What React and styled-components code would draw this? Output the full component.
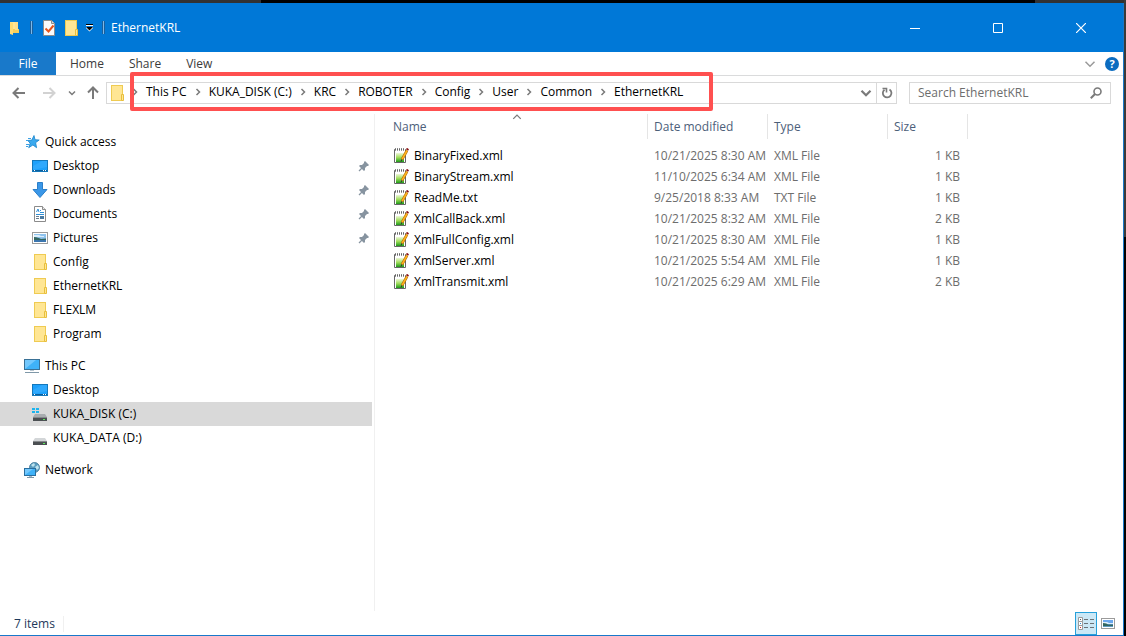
import React from "react";
import styled, { createGlobalStyle } from "styled-components";

const crumbs = [
    "This PC",
    "KUKA_DISK (C:)",
    "KRC",
    "ROBOTER",
    "Config",
    "User",
    "Common",
    "EthernetKRL",
];

const files = [
    { name: "BinaryFixed.xml", date: "10/21/2025 8:30 AM", type: "XML File", size: "1 KB" },
    { name: "BinaryStream.xml", date: "11/10/2025 6:34 AM", type: "XML File", size: "1 KB" },
    { name: "ReadMe.txt", date: "9/25/2018 8:33 AM", type: "TXT File", size: "1 KB" },
    { name: "XmlCallBack.xml", date: "10/21/2025 8:32 AM", type: "XML File", size: "2 KB" },
    { name: "XmlFullConfig.xml", date: "10/21/2025 8:30 AM", type: "XML File", size: "1 KB" },
    { name: "XmlServer.xml", date: "10/21/2025 5:54 AM", type: "XML File", size: "1 KB" },
    { name: "XmlTransmit.xml", date: "10/21/2025 6:29 AM", type: "XML File", size: "2 KB" },
];

const FolderIcon = () => (
    <svg width="16" height="16" viewBox="0 0 16 16">
        <rect x="2.5" y="0.5" width="11" height="15" fill="#ffe694" stroke="#efcb52" />
        <path d="M12.5 9.5h2v6h-2z" fill="#ffe694" stroke="#e8bf3c" />
    </svg>
);

const SmallFolderIcon = () => (
    <svg width="16" height="16" viewBox="0 0 16 16">
        <path d="M4 2h5v11H4z" fill="#ffe694" />
        <path d="M4 2l3 1v12l-3-1z" fill="#ffdc73" />
        <path d="M7 9h6v4H7z" fill="#f5cf5b" />
        <path d="M9 2h3v8H9z" fill="#ffe08a" />
    </svg>
);

const CheckDocIcon = () => (
    <svg width="16" height="16" viewBox="0 0 16 16">
        <path d="M2.5 0.5h8l3 3v12h-11z" fill="#fbfbfb" stroke="#8d8d8d" />
        <path d="M10.5 0.5v3h3" fill="#ddd" stroke="#8d8d8d" />
        <path d="M4.5 8.5l3 3 5-6" fill="none" stroke="#e8541c" strokeWidth="2" />
    </svg>
);

const QuickMenuIcon = () => (
    <svg width="9" height="8" viewBox="0 0 9 8">
        <path d="M1 0h7v1H1z" fill="#000" />
        <path d="M1 1h7v1H1z" fill="#fff" />
        <path d="M1 3h7v1L4.5 7.5 1 4z" fill="#fff" />
        <path d="M1 3h7L4.5 6.5z" fill="#000" />
    </svg>
);

const StarIcon = () => (
    <svg width="16" height="16" viewBox="0 0 16 16">
        <path
            d="M10 1.500l1 4.200 4.200.3-3.600 2.700 1 5-3.700-2.700-4.200 2.700 1.400-4.500-2.300-2.700 4-.4z"
            fill="#3aa9ee"
            stroke="#1b84cc"
            strokeWidth="0.8"
        />
        <path d="M4 4.500h3M2 6.500h2M2 10.500h3M2 12.500h2" stroke="#3aa0e6" />
    </svg>
);

const DesktopIcon = () => (
    <svg width="16" height="16" viewBox="0 0 16 16">
        <rect x="0.5" y="2.500" width="15" height="11" fill="#1ea1fb" stroke="#1478bb" />
        <path d="M1 12V8L10 3h5v6z" fill="#3fb1ff" opacity="0.5" />
        <path d="M1 12.500h14" stroke="#0a5e9c" />
        <path d="M2 12.500h1M11 12.500h1M13 12.500h1" stroke="#fff" />
    </svg>
);

const DownloadIcon = () => (
    <svg width="16" height="16" viewBox="0 0 16 16">
        <path d="M5.500 0.500h5v7h4.500L8 15.500 1 7.500h4.500z" fill="#3a97e8" stroke="#2b7fc9" />
    </svg>
);

const DocumentIcon = () => (
    <svg width="16" height="16" viewBox="0 0 16 16">
        <path d="M2.500 0.500h8l3 3v12h-11z" fill="#fff" stroke="#8b8b8b" />
        <path d="M10.500 0.500v3h3" fill="#e8e8e8" stroke="#8b8b8b" />
        <path d="M4.500 6l1.500-3 1 3M8 4.500h1M8 6.500h4M4 8.500h8" fill="none" stroke="#2f8fd6" />
        <path d="M4 10.500h3M4 12.500h3" stroke="#6a7c8c" />
        <path d="M8 10h4v3H8z" fill="#4a7aa0" />
    </svg>
);

const PictureIcon = () => (
    <svg width="16" height="16" viewBox="0 0 16 16">
        <rect x="0.500" y="2.500" width="15" height="11" fill="#fff" stroke="#9b9b9b" />
        <path d="M2 4h12v8H2z" fill="#8fc3ee" />
        <path d="M2 5h5l2 1h3v1H2z" fill="#dceefb" />
        <path d="M2 7c3 0 5 1 7 2l5-.5V10H2z" fill="#33665f" />
        <path d="M2 10h12v2H2z" fill="#3c76ae" />
    </svg>
);

const ThumbnailsIcon = () => (
    <svg width="14" height="12" viewBox="0 0 14 12">
        <rect x="0.500" y="0.500" width="13" height="10" fill="#fff" stroke="#9b9b9b" />
        <path d="M2 2h10v7H2z" fill="#6aa7ee" />
        <path d="M2 4h4l2 1h4v1H2z" fill="#dceefb" />
        <path d="M2 5c3 0 4 1 5 1.500h5V8H2z" fill="#33665f" />
        <path d="M2 8h10v1H2z" fill="#5e9ac0" />
    </svg>
);

const ThisPcIcon = () => (
    <svg width="16" height="16" viewBox="0 0 16 16">
        <rect x="0.500" y="1.500" width="15" height="10" fill="#3fb2f8" stroke="#3a7196" />
        <path d="M1 11V2h11z" fill="#8ad2ff" opacity="0.7" />
        <path d="M6 12h4v1H6z" fill="#b8c6d0" />
        <path d="M1 14.500h14" stroke="#7f98a8" />
    </svg>
);

const Drive = ({ system }) => (
    <svg width="16" height="16" viewBox="0 0 16 16">
        {system && (
            <path d="M0 2h3v2H0zM4 2h3v2H4zM0 5h3v2H0zM4 5h3v2H4z" fill="#1cb4ee" />
        )}
        <path d="M3 8h10l2 3H1z" fill={system ? "#a9adb0" : "#d3d6d8"} />
        <path d="M1 11h14v4H1z" fill="#4b4f52" />
        <path d="M1 11h14v1H1z" fill="#86898c" />
        <path d="M11 13h2v1h-2z" fill="#5df05d" />
    </svg>
);

const SystemDriveIcon = () => <Drive system />;

const NetworkIcon = () => (
    <svg width="16" height="16" viewBox="0 0 16 16">
        <circle cx="10.500" cy="5.500" r="5" fill="#5b9dbf" stroke="#3b7595" strokeWidth="0.8" />
        <path d="M7 3l3-2 1 2-2 2zM11 5l3-2 1 3-2 2z" fill="#bfe3ee" />
        <rect x="0.500" y="6.500" width="11" height="7" fill="#3fb2f8" stroke="#2a6e9e" />
        <path d="M1 13V7h8z" fill="#8ad2ff" opacity="0.7" />
        <path d="M3 15.500h7" stroke="#7f98a8" />
        <path d="M5 14h3v1H5z" fill="#a8bac6" />
    </svg>
);

const PinIcon = () => (
    <svg width="12" height="12" viewBox="0 0 12 12">
        <path d="M7 1l4 4-1 1-1 0-2 2v2l-1 1-5-5 1-1h2l2-2 0-1z" fill="#8794a0" />
        <path d="M4 8l-3 3" stroke="#8794a0" strokeWidth="1.200" />
    </svg>
);

const NoteIcon = () => (
    <svg width="16" height="16" viewBox="0 0 16 16">
        <defs>
            <linearGradient id="sheet" x1="0" y1="0" x2="0" y2="1">
                <stop offset="0" stopColor="#eef8d8" />
                <stop offset="0.5" stopColor="#9fdc5a" />
                <stop offset="1" stopColor="#1f9a1a" />
            </linearGradient>
        </defs>
        <path d="M1.500 1.500h11v13h-11z" fill="#fff" stroke="#666" />
        <path d="M2 0.500h10" stroke="#888" strokeDasharray="1 1" />
        <path d="M3 1.500h10" stroke="#fff" strokeDasharray="1 1" />
        <path d="M2 2.500h10" stroke="#999" strokeDasharray="1 1" />
        <path d="M3 5h8v9H3z" fill="url(#sheet)" />
        <path d="M14 2.500L9 11.500" stroke="#a86500" strokeWidth="2.600" />
        <path d="M14 2.500L9 11.500" stroke="#ffb21e" strokeWidth="1.600" />
        <path d="M14 2l1-1.500" stroke="#8a1414" strokeWidth="2.500" />
        <path d="M9 11.200L8 13.500" stroke="#333" />
    </svg>
);

const ArrowIcon = ({ color = "#7a7a7a", turn = 0 }) => (
    <svg width="14" height="14" viewBox="0 0 14 14">
        <path
            d="M13 7H2M6.500 2L1.500 7l5 5"
            transform={`rotate(${turn} 7 7)`}
            fill="none"
            stroke={color}
            strokeWidth="2"
        />
    </svg>
);

const Chevron = ({ size = 8, color = "#7a7a7a", weight = 1.5, turn = 0 }) => (
    <svg width={size} height={size} viewBox="0 0 8 8">
        <path
            d="M1 2.500l3 3 3-3"
            transform={`rotate(${turn} 4 4)`}
            fill="none"
            stroke={color}
            strokeWidth={weight}
        />
    </svg>
);

const quickAccess = [
    { label: "Desktop", icon: DesktopIcon, pinned: true },
    { label: "Downloads", icon: DownloadIcon, pinned: true },
    { label: "Documents", icon: DocumentIcon, pinned: true },
    { label: "Pictures", icon: PictureIcon, pinned: true },
    { label: "Config", icon: FolderIcon },
    { label: "EthernetKRL", icon: FolderIcon },
    { label: "FLEXLM", icon: FolderIcon },
    { label: "Program", icon: FolderIcon },
];

const thisPc = [
    { label: "Desktop", icon: DesktopIcon },
    { label: "KUKA_DISK (C:)", icon: SystemDriveIcon, selected: true },
    { label: "KUKA_DATA (D:)", icon: Drive },
];

function TreeGroup({ label, icon: Icon, items = [] }) {
    return (
        <Group>
            <TreeItem type="button">
                <Icon />
                <span>{label}</span>
            </TreeItem>
            {items.map((item) => (
                <TreeItem
                    key={item.label}
                    type="button"
                    $nested
                    $selected={item.selected}
                >
                    <item.icon />
                    <span>{item.label}</span>
                    {item.pinned && (
                        <Pin>
                            <PinIcon />
                        </Pin>
                    )}
                </TreeItem>
            ))}
        </Group>
    );
}

export default function App() {
    return (
        <>
            <GlobalStyle />
            <Backdrop>
                <BackdropEdge />
                <Window>
                    <TitleBar>
                        <SmallFolderIcon />
                        <TitleDivider />
                        <QuickButtons>
                            <IconButton type="button" aria-label="Properties">
                                <CheckDocIcon />
                            </IconButton>
                            <IconButton type="button" aria-label="New folder">
                                <FolderIcon />
                            </IconButton>
                            <IconButton type="button" aria-label="Customize toolbar">
                                <QuickMenuIcon />
                            </IconButton>
                        </QuickButtons>
                        <TitleDivider />
                        <Title>EthernetKRL</Title>
                        <WindowButton type="button" aria-label="Minimize">
                            <svg width="10" height="10" viewBox="0 0 10 10">
                                <path d="M0 5.500h10" stroke="#fff" />
                            </svg>
                        </WindowButton>
                        <WindowButton type="button" aria-label="Maximize">
                            <svg width="10" height="10" viewBox="0 0 10 10">
                                <path d="M0.500 0.500h9v9h-9z" fill="none" stroke="#fff" />
                            </svg>
                        </WindowButton>
                        <WindowButton type="button" aria-label="Close">
                            <svg width="10" height="10" viewBox="0 0 10 10">
                                <path d="M0 0l10 10M10 0L0 10" stroke="#fff" strokeWidth="1.200" />
                            </svg>
                        </WindowButton>
                    </TitleBar>

                    <Ribbon>
                        <FileTab type="button">File</FileTab>
                        <RibbonTab type="button">Home</RibbonTab>
                        <RibbonTab type="button">Share</RibbonTab>
                        <RibbonTab type="button">View</RibbonTab>
                        <RibbonEnd>
                            <IconButton type="button" aria-label="Expand the ribbon">
                                <Chevron size={12} color="#9a9a9a" weight={1} />
                            </IconButton>
                            <HelpButton type="button">?</HelpButton>
                        </RibbonEnd>
                    </Ribbon>

                    <NavBar>
                        <NavButtons>
                            <IconButton type="button" aria-label="Back">
                                <ArrowIcon />
                            </IconButton>
                            <IconButton type="button" aria-label="Forward">
                                <ArrowIcon color="#d2d2d2" turn={180} />
                            </IconButton>
                            <IconButton type="button" aria-label="Recent locations">
                                <Chevron />
                            </IconButton>
                            <IconButton type="button" aria-label="Up">
                                <ArrowIcon turn={90} />
                            </IconButton>
                        </NavButtons>
                        <AddressBar>
                            <FolderIcon />
                            <Crumbs>
                                {crumbs.map((crumb) => (
                                    <li key={crumb}>
                                        <Chevron turn={-90} />
                                        <a href="#crumb">{crumb}</a>
                                    </li>
                                ))}
                                <Highlight />
                            </Crumbs>
                            <AddressButton type="button" aria-label="Previous locations">
                                <Chevron size={12} />
                            </AddressButton>
                            <AddressButton type="button" aria-label="Refresh" $divided>
                                <svg width="12" height="12" viewBox="0 0 12 12">
                                    <path
                                        d="M8.500 2.500A4.300 4.300 0 1 1 3.500 2.700"
                                        fill="none"
                                        stroke="#7a7a7a"
                                        strokeWidth="1.800"
                                    />
                                    <path d="M1.500 1.500H5.500V5.500" fill="none" stroke="#7a7a7a" strokeWidth="1.600" />
                                </svg>
                            </AddressButton>
                        </AddressBar>
                        <SearchBox>
                            <input
                                type="text"
                                aria-label="Search EthernetKRL"
                                placeholder="Search EthernetKRL"
                            />
                            <svg width="12" height="12" viewBox="0 0 12 12">
                                <circle cx="7.500" cy="4.500" r="3.500" fill="none" stroke="#7a7a7a" strokeWidth="1.600" />
                                <path d="M5 7L0.800 11.200" stroke="#7a7a7a" strokeWidth="2" />
                            </svg>
                        </SearchBox>
                    </NavBar>

                    <Body>
                        <Tree>
                            <TreeGroup label="Quick access" icon={StarIcon} items={quickAccess} />
                            <TreeGroup label="This PC" icon={ThisPcIcon} items={thisPc} />
                            <TreeGroup label="Network" icon={NetworkIcon} />
                        </Tree>
                        <Listing>
                            <FileTable>
                                <colgroup>
                                    <NameCol />
                                    <MidCol />
                                    <MidCol />
                                    <SizeCol />
                                </colgroup>
                                <thead>
                                    <tr>
                                        <th>
                                            Name
                                            <SortMark>
                                                <Chevron size={10} weight={1} turn={180} />
                                            </SortMark>
                                        </th>
                                        <th>Date modified</th>
                                        <th>Type</th>
                                        <th>Size</th>
                                    </tr>
                                </thead>
                                <tbody>
                                    {files.map((file) => (
                                        <tr key={file.name}>
                                            <td>
                                                <FileName>
                                                    <NoteIcon />
                                                    {file.name}
                                                </FileName>
                                            </td>
                                            <td>{file.date}</td>
                                            <td>{file.type}</td>
                                            <td>{file.size}</td>
                                        </tr>
                                    ))}
                                </tbody>
                            </FileTable>
                        </Listing>
                    </Body>

                    <StatusBar>
                        <ItemCount>7 items</ItemCount>
                        <ViewButton type="button" aria-label="Details view" $active>
                            <svg width="16" height="14" viewBox="0 0 16 14">
                                <path
                                    d="M0.500 0.500h4v4h-4zM0.500 4.500h4v4h-4zM0.500 8.500h4v4h-4z"
                                    fill="#fff"
                                    stroke="#9b9b9b"
                                />
                                <path d="M2 2.500h1" stroke="#555" />
                                <path d="M2 6.500h1" stroke="#2f8fd6" />
                                <path d="M2 10.500h1" stroke="#d03030" />
                                <path d="M6 2.500h4M12 2.500h4M6 6.500h4M12 6.500h4M6 10.500h4M12 10.500h4" stroke="#6b7378" />
                            </svg>
                        </ViewButton>
                        <ViewButton type="button" aria-label="Large thumbnails view">
                            <ThumbnailsIcon />
                        </ViewButton>
                    </StatusBar>
                </Window>
            </Backdrop>
        </>
    );
}

const GlobalStyle = createGlobalStyle`
    * {
        box-sizing: border-box;
    }

    body {
        margin: 0;
        font-family: "Open Sans", "Noto Sans", sans-serif;
        font-size: 12px;
        line-height: 16px;
        color: #000;
    }

    button,
    input {
        font: inherit;
        color: inherit;
        border: none;
        background: none;
        padding: 0;
    }

    svg {
        display: block;
        flex: none;
    }
`;

const Backdrop = styled.div`
    min-height: 100vh;
    display: flex;
    flex-direction: column;
    padding-right: 2px;
    background: linear-gradient(#3a3a3a, #3a3a3a) top right / 2px 237px no-repeat #000;
`;

const BackdropEdge = styled.div`
    height: 3px;
    background: linear-gradient(90deg, #323232 261px, #000 261px, #000 calc(100% - 89px), #323232 calc(100% - 89px));
`;

const Window = styled.main`
    flex: 1;
    display: flex;
    flex-direction: column;
    background: #fff;
    border-right: 1px solid #1979ca;
    border-bottom: 1px solid #1979ca;
`;

const TitleBar = styled.header`
    display: flex;
    align-items: center;
    height: 49px;
    padding: 0 1px 0 6px;
    background: #0078d7;
    color: #fff;
`;

const TitleDivider = styled.span`
    width: 3px;
    height: 13px;
    margin: 0 6px 0 8px;
    border: solid #1a5f9c;
    border-width: 0 1px;
    background: #7db8e8;
`;

const QuickButtons = styled.div`
    display: flex;
    align-items: center;
    gap: 6px;
    padding-left: 2px;
`;

const IconButton = styled.button`
    display: flex;
    align-items: center;
`;

const Title = styled.h1`
    flex: 1;
    margin: 0;
    font-size: 12px;
    font-weight: 400;
`;

const WindowButton = styled.button`
    display: flex;
    align-items: center;
    justify-content: center;
    width: 83px;
    height: 48px;
`;

const Ribbon = styled.nav`
    display: flex;
    height: 24px;
    border-bottom: 1px solid #dadbdc;
`;

const FileTab = styled.button`
    width: 56px;
    margin-right: 14px;
    background: #1979ca;
    color: #fff;
`;

const RibbonTab = styled.button`
    margin-right: 25px;
    color: #3b3b3b;
`;

const RibbonEnd = styled.div`
    display: flex;
    align-items: center;
    gap: 9px;
    margin-left: auto;
    padding-right: 4px;
`;

const HelpButton = styled.button`
    width: 14px;
    height: 14px;
    border-radius: 50%;
    background: #0c6cc0;
    color: #fff;
    font-size: 11px;
    font-weight: 700;
    line-height: 14px;
`;

const NavBar = styled.div`
    display: flex;
    align-items: center;
    height: 34px;
    padding-right: 12px;
`;

const NavButtons = styled.div`
    display: grid;
    grid-template-columns: 30px 26px 18px 14px;
    align-items: center;
    padding: 0 6px 0 12px;
`;

const AddressBar = styled.div`
    display: flex;
    align-items: center;
    flex: 1;
    height: 22px;
    margin-right: 12px;
    padding-left: 2px;
    border: 1px solid #d9d9d9;
`;

const Crumbs = styled.ol`
    position: relative;
    display: flex;
    margin: 0 auto 2px 6px;
    padding: 0;
    list-style: none;

    li {
        display: flex;
        align-items: center;
        gap: 7px;
        margin-right: 7px;
    }

    a {
        color: inherit;
        text-decoration: none;
        white-space: nowrap;
    }
`;

const Highlight = styled.span`
    position: absolute;
    top: -12px;
    bottom: -11px;
    left: -1px;
    width: 583px;
    border: 4px solid #ff5050;
    border-radius: 2px;
    pointer-events: none;
`;

const AddressButton = styled.button`
    display: flex;
    align-items: center;
    justify-content: center;
    width: 20px;
    height: 20px;
    border-left: ${(props) => (props.$divided ? "1px solid #d9d9d9" : "none")};
`;

const SearchBox = styled.label`
    display: flex;
    align-items: center;
    width: 202px;
    height: 22px;
    padding: 0 8px;
    border: 1px solid #d9d9d9;

    input {
        flex: 1;
        min-width: 0;
        outline: none;
    }

    input::placeholder {
        color: #6d6d6d;
        opacity: 1;
    }
`;

const Body = styled.div`
    display: flex;
    flex: 1;
    padding-top: 4px;
`;

const Tree = styled.aside`
    display: flex;
    flex-direction: column;
    gap: 8px;
    width: 375px;
    padding: 16px 2px 0 0;
    border-right: 1px solid #f0f0f0;
`;

const Group = styled.div`
    display: flex;
    flex-direction: column;
`;

const TreeItem = styled.button`
    display: flex;
    align-items: center;
    gap: 5px;
    height: 24px;
    padding-left: ${(props) => (props.$nested ? "32px" : "24px")};
    background: ${(props) => (props.$selected ? "#d9d9d9" : "transparent")};
    text-align: left;
`;

const Pin = styled.span`
    margin-left: auto;
    padding-right: 2px;
`;

const Listing = styled.section`
    flex: 1;
    padding-left: 12px;
`;

const FileTable = styled.table`
    width: 581px;
    table-layout: fixed;
    border-collapse: separate;
    border-spacing: 0;

    th {
        position: relative;
        height: 25px;
        padding: 0 6px;
        border-right: 1px solid #e5e5e5;
        color: #4c607a;
        font-weight: 400;
        text-align: left;
    }

    td {
        height: 21px;
        padding: 0 6px;
        color: #6d6d6d;
        white-space: nowrap;
    }

    td:last-child {
        padding-right: 8px;
        text-align: right;
    }

    tbody::before {
        content: "";
        display: block;
        height: 6px;
    }
`;

const NameCol = styled.col`
    width: 261px;
`;

const MidCol = styled.col`
    width: 120px;
`;

const SizeCol = styled.col`
    width: 80px;
`;

const SortMark = styled.span`
    position: absolute;
    top: -2px;
    left: calc(50% - 5px);
`;

const FileName = styled.span`
    display: flex;
    align-items: center;
    gap: 5px;
    color: #000;
`;

const StatusBar = styled.footer`
    display: flex;
    align-items: center;
    height: 24px;
    padding: 1px 4px 0 14px;
    color: #1e395b;
`;

const ItemCount = styled.span`
    margin-right: auto;
    padding-right: 8px;
    border-right: 1px solid #f0f0f0;
`;

const ViewButton = styled.button`
    display: flex;
    align-items: center;
    justify-content: center;
    width: 22px;
    height: 23px;
    border: 1px solid ${(props) => (props.$active ? "#26a0da" : "transparent")};
    background: ${(props) => (props.$active ? "#cbe8f6" : "transparent")};
`;
